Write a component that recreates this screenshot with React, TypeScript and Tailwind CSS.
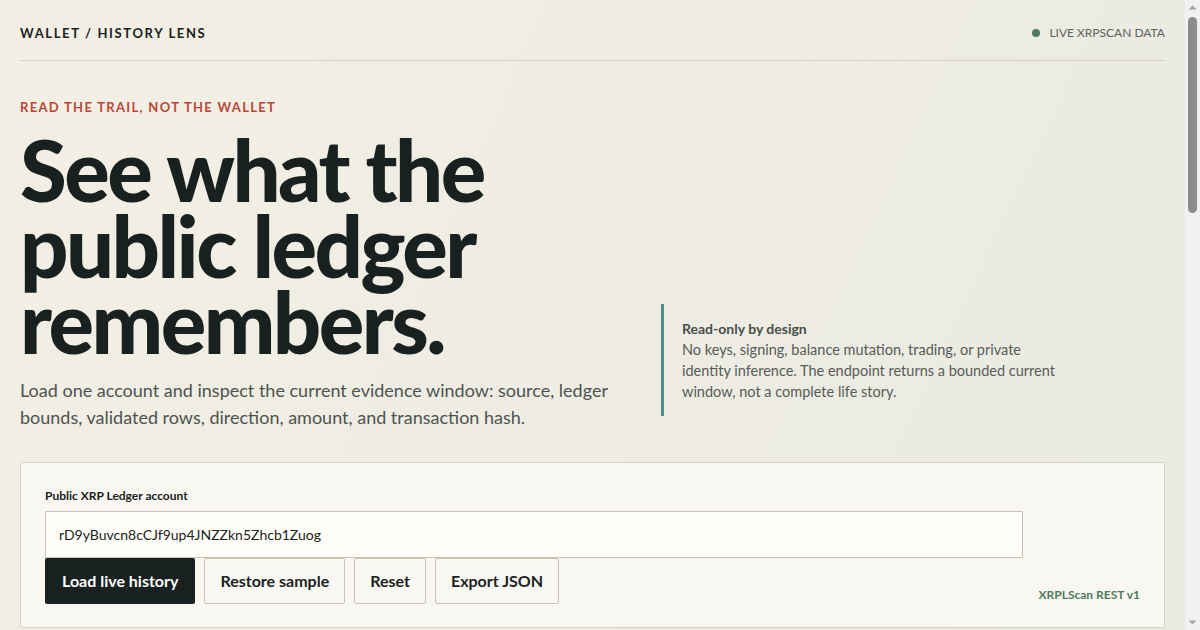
const sans = "font-['Lato','Open_Sans',sans-serif]";

function Header() {
  return (
    <header className="flex items-center justify-between border-b border-[#d6d1c4] pb-[19px] pt-[25px]">
      <div className="text-[13px] font-bold uppercase leading-[16px] tracking-[0.125em] text-[#1b2321]">
        Wallet / History Lens
      </div>
      <div className="flex items-center gap-[9px] text-[12px] uppercase leading-[16px] text-[#5b615c]">
        <span className="h-[8px] w-[8px] rounded-full bg-[#4b7d5d]" />
        Live XRPScan data
      </div>
    </header>
  );
}

function Hero() {
  return (
    <section className="grid grid-cols-[600px_1fr] items-end gap-[41px] pt-[38px]">
      <div>
        <p className="text-[13px] font-bold uppercase leading-[16px] tracking-[0.1em] text-[#b9483a]">
          Read the trail, not the wallet
        </p>
        <h1 className="mt-[16px] text-[85px] font-black leading-[76px] tracking-[-0.03em] text-[#18211f]">
          See what the
          <br />
          public ledger
          <br />
          remembers.
        </h1>
        <p className="mt-[18px] max-w-[610px] text-[18px] leading-[27px] text-[#4d544f]">
          Load one account and inspect the current evidence window: source, ledger bounds, validated
          rows, direction, amount, and transaction hash.
        </p>
      </div>
      <div className="mb-[15px] border-l-[3px] border-[#4a8e8d] py-[14px] pl-[18px]">
        <div className="max-w-[385px] text-[14.5px] leading-[21px] text-[#555c57]">
          <div className="text-[14px] font-bold text-[#474f4a]">Read-only by design</div>
          <p>
            No keys, signing, balance mutation, trading, or private identity inference. The endpoint
            returns a bounded current window, not a complete life story.
          </p>
        </div>
      </div>
    </section>
  );
}

function Lookup() {
  const buttons = ["Restore sample", "Reset", "Export JSON"];
  return (
    <section className="mt-[31px] flex items-end gap-[15px] rounded-[2px] border border-[#d8d3c6] bg-[#f8f7f1] px-[24px] pb-[23px] pt-[25px]">
      <div className="flex-1">
        <label className="block text-[12px] font-bold leading-[15px] text-[#1b2321]">
          Public XRP Ledger account
        </label>
        <input
          readOnly
          value="rD9yBuvcn8cCJf9up4JNZZkn5Zhcb1Zuog"
          className="mt-[8px] block h-[47px] w-full rounded-[1px] border border-[#c9c2b3] bg-[#fefdf8] px-[13px] text-[14px] text-[#1b2321] outline-none"
        />
        <div className="flex gap-[9px]">
          <button className="h-[46px] rounded-[2px] bg-[#18211f] px-[17px] text-[16px] font-bold text-white">
            Load live history
          </button>
          {buttons.map((b) => (
            <button
              key={b}
              className="h-[46px] rounded-[2px] border border-[#c9c2b3] bg-[#f9f8f3] px-[15px] text-[16px] font-bold text-[#1b2321]"
            >
              {b}
            </button>
          ))}
        </div>
      </div>
      <div className="pb-[2px] text-[12px] font-bold leading-[15px] text-[#4b7d5d]">XRPLScan REST v1</div>
    </section>
  );
}

function Scrollbar() {
  return (
    <aside className="flex h-screen w-[15px] shrink-0 flex-col items-center bg-[#f1f1f1]">
      <svg width="15" height="15" viewBox="0 0 15 15" className="shrink-0">
        <path d="M3.5 9.5 L7.5 5.5 L11.5 9.5 Z" fill="#a3a3a3" />
      </svg>
      <div className="mt-[2px] h-[196px] w-[9px] rounded-full bg-[#8b8b8b]" />
      <div className="flex-1" />
      <svg width="15" height="15" viewBox="0 0 15 15" className="shrink-0">
        <path d="M3.5 5.5 L7.5 9.5 L11.5 5.5 Z" fill="#a3a3a3" />
      </svg>
    </aside>
  );
}

export default function App() {
  return (
    <div className={`${sans} flex h-screen overflow-hidden bg-[linear-gradient(115deg,#f3efe4_0%,#eeece3_55%,#e9eae1_100%)]`}>
      <main className="min-w-0 flex-1 px-5">
        <Header />
        <Hero />
        <Lookup />
        <div className="h-[600px]" />
      </main>
      <Scrollbar />
    </div>
  );
}
